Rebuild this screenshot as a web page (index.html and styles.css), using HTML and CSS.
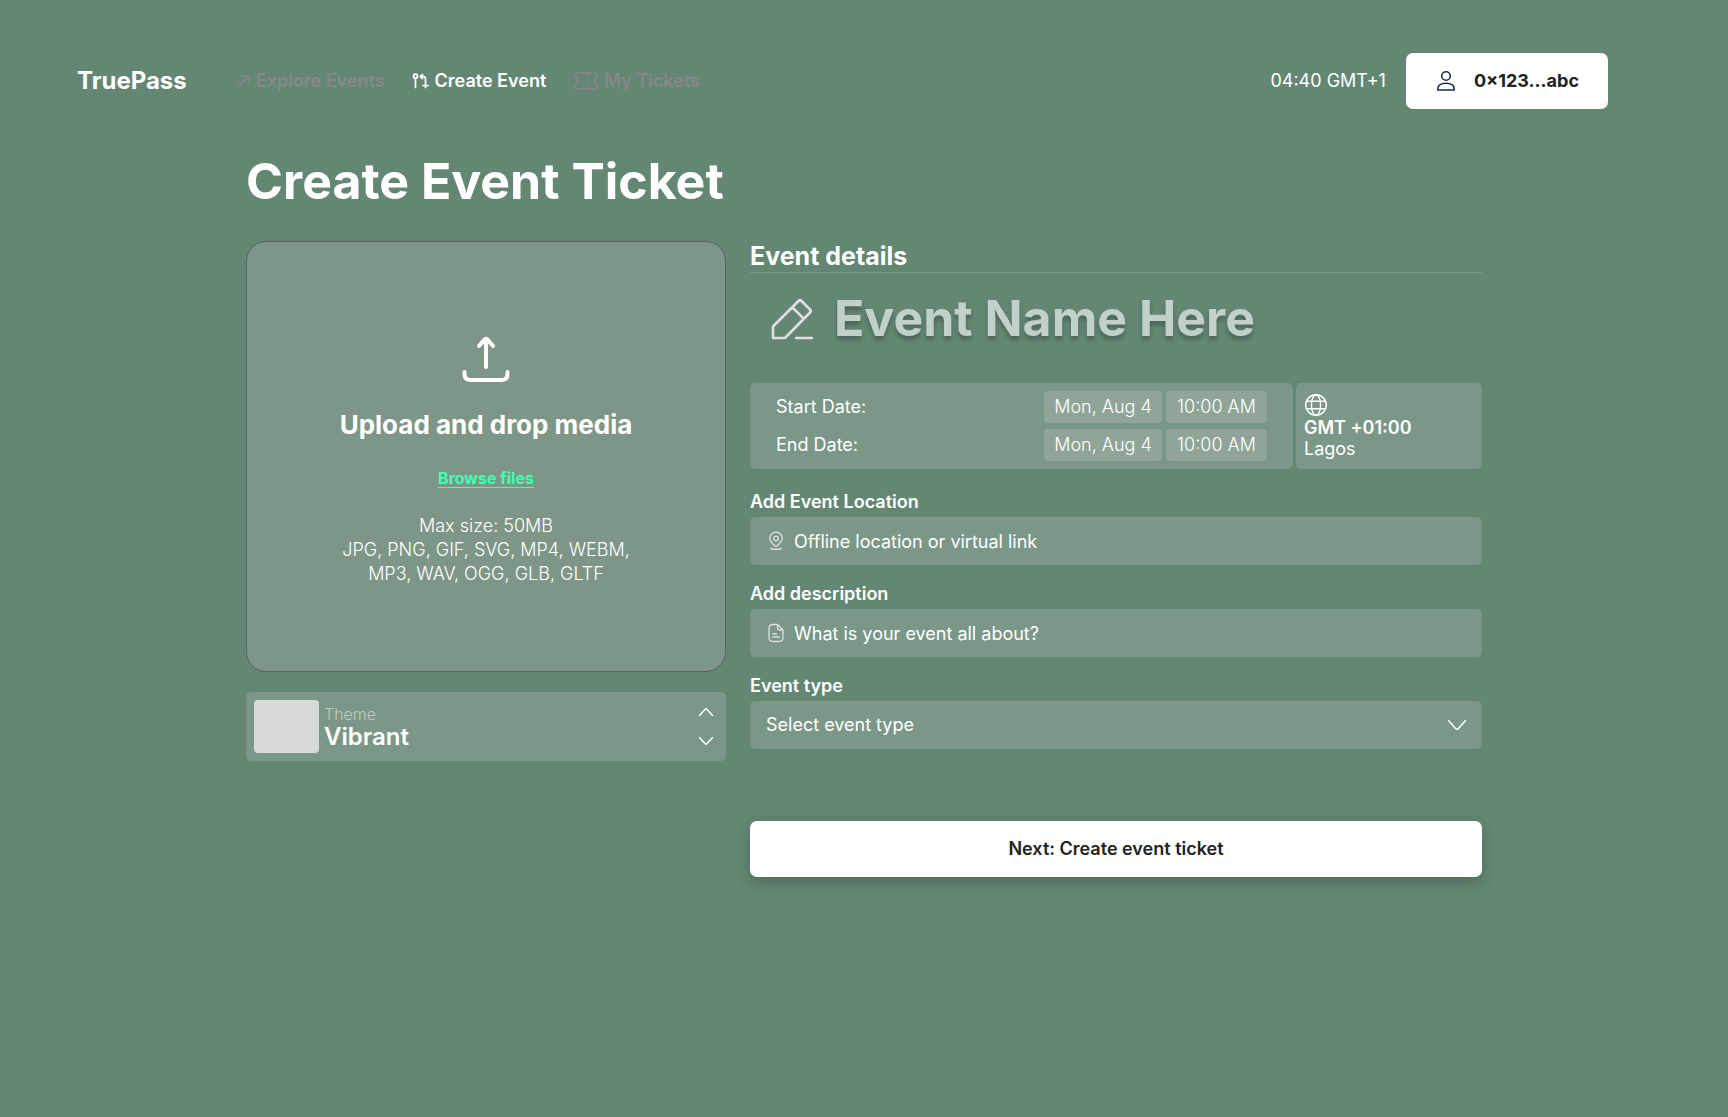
FILE: index.html
```html
<!DOCTYPE html>
<html lang="en">
<head>
<meta charset="utf-8">
<meta name="viewport" content="width=device-width, initial-scale=1">
<title>TruePass – Create Event Ticket</title>
<link rel="stylesheet" href="styles.css">
</head>
<body>
<header class="header">
  <a class="logo" href="#">TruePass</a>
  <nav class="nav">
    <a class="nav-link" href="#">
      <svg width="14" height="14" viewBox="0 0 14 14" fill="none" stroke="currentColor" stroke-width="1.3" stroke-linecap="round" stroke-linejoin="round"><path d="M1.5 12.5 12 2M3.5 1.8H12.2V10.5"/></svg>
      Explore Events
    </a>
    <a class="nav-link nav-link-active" href="#">
      <svg width="18" height="18" viewBox="0 0 18 18" fill="none" stroke="currentColor" stroke-width="1.7" stroke-linecap="round" stroke-linejoin="round"><circle cx="3.500" cy="4.200" r="2"/><path d="M3.500 6.500V15.500M13.500 8V15.500M11 13.500H16M9 4.500H12.200L13.500 6V8"/><path fill="currentColor" d="M10.500 2.500 8.300 4.500 10.500 6.500Z"/></svg>
      Create Event
    </a>
    <a class="nav-link" href="#">
      <svg width="26" height="18" viewBox="0 0 26 18" fill="none" stroke="currentColor" stroke-width="1.500" stroke-linecap="round" stroke-linejoin="round"><path d="M3.500 1H22.500Q24.200 1 24.200 3V4.800C20.500 6.500 20.500 11.500 24.200 13.200V15Q24.200 17 22.500 17H3.500Q1.800 17 1.800 15V13.200C5.500 11.500 5.500 6.500 1.800 4.800V3Q1.800 1 3.500 1Z"/><path d="M14.500 1.500V4M14.500 7.500V10.500M14.500 14V16.500"/></svg>
      My Tickets
    </a>
  </nav>
  <span class="clock">04:40 GMT+1</span>
  <button class="wallet" type="button">
    <svg width="24" height="24" viewBox="0 0 24 24" fill="none" stroke="#1f2a4a" stroke-width="1.600" stroke-linejoin="round"><circle cx="12" cy="7" r="4.300"/><path d="M3.800 21V20C3.800 16.500 7 14.300 12 14.300S20.200 16.500 20.200 20V21Z"/></svg>
    0×123...abc
  </button>
</header>

<main class="page">
  <h1 class="page-title">Create Event Ticket</h1>
  <div class="columns">
    <section class="media">
      <div class="dropzone">
        <svg class="upload-icon" width="56" height="56" viewBox="0 0 56 56" fill="none" stroke="#fff" stroke-width="4" stroke-linecap="round" stroke-linejoin="round"><path d="M28 36V9M21 15 26.500 8.600Q28 7 29.500 8.600L35 15"/><path d="M6.500 41V43Q6.500 49 12.500 49H43.500Q49.500 49 49.500 43V41"/></svg>
        <h2 class="dropzone-title">Upload and drop media</h2>
        <a class="browse" href="#">Browse files</a>
        <p class="formats">Max size: 50MB<br>JPG, PNG, GIF, SVG, MP4, WEBM,<br>MP3, WAV, OGG, GLB, GLTF</p>
      </div>
      <div class="theme">
        <div class="swatch"></div>
        <div class="theme-text">
          <span class="theme-label">Theme</span>
          <strong class="theme-name">Vibrant</strong>
        </div>
        <div class="stepper">
          <button class="step" type="button" aria-label="Previous theme"><svg width="16" height="10" viewBox="0 0 16 10" fill="none" stroke="#fff" stroke-width="1.500" stroke-linecap="round" stroke-linejoin="round"><path d="M1.500 8.500 7.200 2.200Q8 1.400 8.800 2.200L14.500 8.500"/></svg></button>
          <button class="step" type="button" aria-label="Next theme"><svg width="16" height="10" viewBox="0 0 16 10" fill="none" stroke="#fff" stroke-width="1.500" stroke-linecap="round" stroke-linejoin="round"><path d="M1.500 1.500 7.200 7.800Q8 8.600 8.800 7.800L14.500 1.500"/></svg></button>
        </div>
      </div>
    </section>

    <form class="details">
      <h2 class="details-title">Event details</h2>
      <div class="name-row">
        <svg width="48" height="48" viewBox="0 -1 48 48" fill="none" stroke="#e0e0e0" stroke-width="2.600" stroke-linecap="round" stroke-linejoin="round"><path d="M5 43V31.500L30.500 6Q32 4.500 33.500 6L42 14.500Q43.500 16 42 17.500L17 43ZM24.500 12.500 35.500 23.500M28 43H44"/></svg>
        <input class="name-input" type="text" placeholder="Event Name Here" aria-label="Event name">
      </div>
      <div class="schedule">
        <div class="dates">
          <div class="date-row">
            <span class="date-label">Start Date:</span>
            <button class="chip chip-day" type="button">Mon, Aug 4</button>
            <button class="chip chip-time" type="button">10:00 AM</button>
          </div>
          <div class="date-row">
            <span class="date-label">End Date:</span>
            <button class="chip chip-day" type="button">Mon, Aug 4</button>
            <button class="chip chip-time" type="button">10:00 AM</button>
          </div>
        </div>
        <button class="timezone" type="button">
          <svg width="24" height="24" viewBox="0 0 24 24" fill="none" stroke="#fff" stroke-width="1.400"><circle cx="12" cy="12" r="10.300"/><ellipse cx="12" cy="12" rx="4.600" ry="10.300"/><path d="M2.800 8.300H21.200M2.800 15.700H21.200"/></svg>
          <strong class="offset">GMT +01:00</strong>
          <span>Lagos</span>
        </button>
      </div>
      <div class="field">
        <label class="field-label" for="location">Add Event Location</label>
        <div class="control">
          <svg width="20" height="20" viewBox="0 0 20 20" fill="none" stroke="#e0e0e0" stroke-width="1.300" stroke-linecap="round" stroke-linejoin="round"><path d="M10 15.500C6.500 12.800 3.700 10.500 3.700 7.400A6.300 6.300 0 0 1 16.300 7.400C16.300 10.500 13.500 12.800 10 15.500Z"/><circle cx="10" cy="7.500" r="2.300"/><path d="M4.500 17.300Q10 19.600 15.500 17.300"/></svg>
          <input class="control-input" id="location" type="text" placeholder="Offline location or virtual link">
        </div>
      </div>
      <div class="field">
        <label class="field-label" for="description">Add description</label>
        <div class="control">
          <svg width="20" height="20" viewBox="0 0 20 20" fill="none" stroke="#e0e0e0" stroke-width="1.300" stroke-linecap="round" stroke-linejoin="round"><path d="M11.500 1.500H7Q3 1.500 3 5.500V14.500Q3 18.500 7 18.500H13Q17 18.500 17 14.500V7ZM11.500 1.500V4.500Q11.500 7 14 7H17M6.800 11H10.500M6.800 14H13.500"/></svg>
          <input class="control-input" id="description" type="text" placeholder="What is your event all about?">
        </div>
      </div>
      <div class="field">
        <label class="field-label" for="type">Event type</label>
        <div class="control">
          <select class="control-input" id="type"><option>Select event type</option></select>
          <svg width="20" height="12" viewBox="0 0 20 12" fill="none" stroke="#fff" stroke-width="1.500" stroke-linecap="round" stroke-linejoin="round"><path d="M1.500 1.500 8.500 9.500Q10 11 11.500 9.500L18.500 1.500"/></svg>
        </div>
      </div>
      <button class="next" type="submit">Next: Create event ticket</button>
    </form>
  </div>
</main>
</body>
</html>
```
FILE: styles.css
```css
* {
  box-sizing: border-box;
}

body {
  margin: 0;
  min-height: 100vh;
  background: #638773;
  color: #fff;
  font: 400 18px/24px Inter, "Liberation Sans", sans-serif;
}

h1, h2, p {
  margin: 0;
}

svg {
  display: block;
  flex: none;
}

button, input, select {
  margin: 0;
  padding: 0;
  border: 0;
  background: none;
  color: inherit;
  font: inherit;
}

button {
  cursor: pointer;
}

.header {
  display: flex;
  align-items: center;
  padding: 53px 120px 0 77px;
}

.logo {
  color: #fff;
  font-size: 24px;
  font-weight: 700;
  text-decoration: none;
}

.nav {
  display: flex;
  gap: 27px;
  margin-left: 50px;
}

.nav-link {
  display: flex;
  align-items: center;
  gap: 5px;
  color: #878787;
  font-weight: 600;
  text-decoration: none;
}

.nav-link-active {
  color: #fff;
}

.clock {
  margin-left: auto;
}

.wallet {
  display: flex;
  align-items: center;
  gap: 16px;
  height: 56px;
  margin-left: 20px;
  padding: 0 29px 0 28px;
  border-radius: 7px;
  background: #fff;
  color: #222;
  font-weight: 700;
}

.page {
  max-width: 1236px;
  margin: 0 auto;
  padding: 43px 0 48px;
}

.page-title {
  font-size: 50px;
  line-height: 58px;
  font-weight: 700;
}

.columns {
  display: grid;
  grid-template-columns: minmax(0, 480fr) minmax(0, 732fr);
  gap: 24px;
  align-items: start;
  margin-top: 31px;
}

.dropzone {
  display: flex;
  flex-direction: column;
  align-items: center;
  padding: 89px 24px 85px;
  border: 1px solid #606060;
  border-radius: 20px;
  background: #7e9687;
  text-align: center;
}

.dropzone-title {
  margin-top: 23px;
  font-size: 26px;
  line-height: 30px;
  font-weight: 700;
}

.browse {
  margin-top: 26px;
  color: #42ffb7;
  font-size: 16px;
  font-weight: 700;
  text-underline-offset: 3px;
}

.formats {
  margin-top: 24px;
  font-weight: 300;
}

.theme {
  display: flex;
  align-items: center;
  gap: 5px;
  margin-top: 20px;
  padding: 8px 12px 8px 8px;
  border-radius: 5px;
  background: #7a9787;
}

.swatch {
  width: 65px;
  height: 53px;
  border-radius: 4px;
  background: #d9d9d9;
}

.theme-text {
  display: flex;
  flex-direction: column;
}

.theme-label {
  color: rgba(255, 255, 255, 0.5);
  font-size: 16px;
  line-height: 20px;
  font-weight: 300;
}

.theme-name {
  font-size: 24px;
  line-height: 26px;
  font-weight: 600;
}

.stepper {
  display: grid;
  gap: 19px;
  margin-left: auto;
}

.details-title {
  border-bottom: 1px solid #7a9787;
  font-size: 25px;
  line-height: 31px;
  font-weight: 700;
}

.name-row {
  display: flex;
  align-items: center;
  gap: 18px;
  margin-top: 16px;
  padding-left: 18px;
}

.name-input {
  flex: 1;
  min-width: 0;
  height: 58px;
  font-size: 50px;
  font-weight: 700;
  text-shadow: 0 4px 4px rgba(0, 0, 0, 0.25);
}

.name-input::placeholder {
  color: #c1d0c8;
  opacity: 1;
}

.schedule {
  display: grid;
  grid-template-columns: minmax(0, 543fr) minmax(0, 186fr);
  gap: 3px;
  margin-top: 36px;
}

.dates {
  display: grid;
  gap: 6px;
  padding: 8px 26px;
  border-radius: 5px;
  background: #7a9787;
}

.date-row {
  display: flex;
  align-items: center;
  gap: 4px;
}

.date-label {
  flex: 1;
}

.chip {
  height: 32px;
  border-radius: 4px;
  background: #90a597;
  font-weight: 300;
}

.chip-day {
  width: 118px;
}

.chip-time {
  width: 101px;
}

.timezone {
  display: flex;
  flex-direction: column;
  align-items: flex-start;
  justify-content: center;
  padding: 0 8px;
  border-radius: 5px;
  background: #7a9787;
  line-height: 21px;
}

.offset {
  font-weight: 600;
}

.field {
  display: grid;
  gap: 4px;
  margin-top: 18px;
}

.schedule + .field {
  margin-top: 22px;
}

.field-label {
  line-height: 22px;
  font-weight: 600;
}

.control {
  display: flex;
  align-items: center;
  gap: 8px;
  height: 48px;
  padding: 0 15px 0 16px;
  border-radius: 5px;
  background: #7a9787;
}

.control-input {
  flex: 1;
  min-width: 0;
  height: 48px;
  appearance: none;
}

.control-input::placeholder {
  color: #fff;
  opacity: 1;
}

.next {
  width: 100%;
  height: 56px;
  margin-top: 72px;
  border-radius: 7px;
  background: #fff;
  box-shadow: 0 6px 16px rgba(0, 0, 0, 0.2);
  color: #222;
  font-weight: 600;
}

@media (max-width: 1280px) {
  .header {
    flex-wrap: wrap;
    gap: 16px;
    padding: 24px 24px 0;
  }

  .page {
    padding: 32px 24px;
  }
}

@media (max-width: 1000px) {
  .columns {
    grid-template-columns: minmax(0, 1fr);
  }
}
```
